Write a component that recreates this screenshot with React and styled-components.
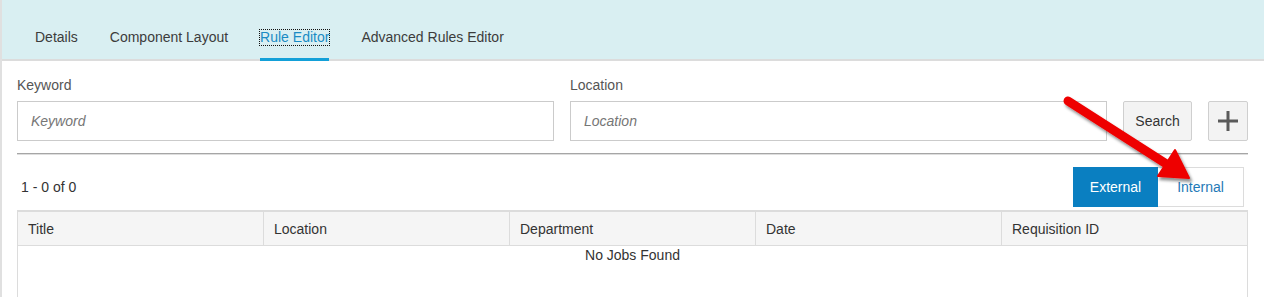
import React from 'react'
import styled, { createGlobalStyle } from 'styled-components'

const GlobalStyle = createGlobalStyle`
    body{
        margin: 0;
        font-family: "Liberation Sans", Arial, sans-serif;
        background: #fff;
    }
`;

const tabs = ['Details', 'Component Layout', 'Rule Editor', 'Advanced Rules Editor']
const columns = ['Title', 'Location', 'Department', 'Date', 'Requisition ID']

const App = () => {
    return (
        <Page>
            <GlobalStyle />
            <TabBar>
                {tabs.map((t) => (
                    <Tab key={t} active={t === 'Rule Editor'}>
                        <span>{t}</span>
                    </Tab>
                ))}
            </TabBar>
            <Content>
                <Filters>
                    <Field>
                        <Label>Keyword</Label>
                        <Input placeholder='Keyword' />
                    </Field>
                    <Field>
                        <Label>Location</Label>
                        <Input placeholder='Location' />
                    </Field>
                    <Button>Search</Button>
                    <Button square aria-label='Add'>
                        <svg width='22' height='22' viewBox='0 0 22 22'>
                            <path d='M1 11h20M11 1v20' stroke='#5a5a5a' strokeWidth='3' />
                        </svg>
                    </Button>
                </Filters>
                <Divider />
                <ResultsBar>
                    <Count>1 - 0 of 0</Count>
                    <Toggle>
                        <ToggleButton active>External</ToggleButton>
                        <ToggleButton>Internal</ToggleButton>
                    </Toggle>
                </ResultsBar>
                <Table>
                    <thead>
                        <tr>
                            {columns.map((c) => <Th key={c}>{c}</Th>)}
                        </tr>
                    </thead>
                    <tbody>
                        <tr>
                            <EmptyCell colSpan={5}>No Jobs Found</EmptyCell>
                        </tr>
                    </tbody>
                </Table>
            </Content>
            <Arrow width='1264' height='297' viewBox='0 0 1264 297'>
                <defs>
                    <filter id='shadow' x='-20%' y='-20%' width='140%' height='140%'>
                        <feDropShadow dx='2' dy='3' stdDeviation='1.5' floodColor='#000' floodOpacity='0.45' />
                    </filter>
                </defs>
                <g filter='url(#shadow)' fill='#ee0000' stroke='#ee0000'>
                    <line x1='1068' y1='101' x2='1168' y2='165' strokeWidth='9' strokeLinecap='round' />
                    <polygon points='1189,178 1158,176 1175,150' strokeWidth='2' strokeLinejoin='round' />
                </g>
            </Arrow>
        </Page>
    )
}

const Page = styled.div`
    position: relative;
    min-height: 297px;
    border-left: 2px solid #e0e0e0;
    overflow: hidden;
`;

const TabBar = styled.div`
    display: flex;
    gap: 32px;
    height: 61px;
    box-sizing: border-box;
    padding-left: 33px;
    background: #d9eff2;
    box-shadow: inset 0 -2px 0 #dcdcdc;
`;

const Tab = styled.div`
    box-sizing: border-box;
    height: 61px;
    padding-top: 29px;
    font-size: 14px;
    color: ${(p) => (p.active ? '#1a8bc4' : '#3c3c3c')};
    border-bottom: 3px solid ${(p) => (p.active ? '#13a0d8' : 'transparent')};
    span{
        display: inline-block;
        line-height: 15px;
        outline: ${(p) => (p.active ? '1px dotted #111' : 'none')};
    }
`;

const Content = styled.div`
    padding: 17px 16px 0 15px;
`;

const Filters = styled.div`
    display: flex;
    align-items: flex-end;
    gap: 16px;
`;

const Field = styled.div`
    flex: 1;
    display: flex;
    flex-direction: column;
    gap: 8px;
`;

const Label = styled.label`
    font-size: 14px;
    line-height: 15px;
    color: #555;
`;

const Input = styled.input`
    box-sizing: border-box;
    height: 40px;
    width: 100%;
    padding: 0 13px;
    border: 1px solid #cbcbcb;
    font-family: inherit;
    font-size: 14px;
    color: #333;
    &::placeholder{
        color: #767676;
        font-style: italic;
    }
`;

const Button = styled.button`
    box-sizing: border-box;
    height: 40px;
    width: ${(p) => (p.square ? '40px' : '69px')};
    display: flex;
    align-items: center;
    justify-content: center;
    padding: 0;
    background: #f3f3f3;
    border: 1px solid #cfcfcf;
    border-radius: 2px;
    font-family: inherit;
    font-size: 14px;
    color: #333;
`;

const Divider = styled.div`
    margin-top: 12px;
    height: 2px;
    background: linear-gradient(#a6a6a6 50%, #dedede 50%);
`;

const ResultsBar = styled.div`
    display: flex;
    align-items: center;
    justify-content: space-between;
    margin-top: 12px;
    padding-right: 4px;
`;

const Count = styled.span`
    padding-left: 4px;
    font-size: 14px;
    color: #333;
`;

const Toggle = styled.div`
    display: flex;
`;

const ToggleButton = styled.div`
    box-sizing: border-box;
    width: ${(p) => (p.active ? '85px' : '86px')};
    height: 40px;
    display: flex;
    align-items: center;
    justify-content: center;
    font-size: 14px;
    background: ${(p) => (p.active ? '#0a7fc1' : '#fff')};
    color: ${(p) => (p.active ? '#fff' : '#1f7ab7')};
    border: 1px solid ${(p) => (p.active ? '#0a7fc1' : '#dcdcdc')};
    border-left: ${(p) => (p.active ? '1px solid #0a7fc1' : 'none')};
`;

const Table = styled.table`
    width: 100%;
    margin-top: 3px;
    border-collapse: collapse;
    table-layout: fixed;
    border-top: 2px solid #dcdcdc;
    border-left: 1px solid #dcdcdc;
    border-right: 1px solid #dcdcdc;
`;

const Th = styled.th`
    height: 33px;
    padding: 0 10px;
    text-align: left;
    font-weight: normal;
    font-size: 14px;
    color: #333;
    background: #f5f5f5;
    border: 1px solid #dcdcdc;
    border-top: none;
`;

const EmptyCell = styled.td`
    height: 60px;
    padding-top: 1px;
    vertical-align: top;
    text-align: center;
    font-size: 14px;
    line-height: 16px;
    color: #333;
`;

const Arrow = styled.svg`
    position: absolute;
    top: 0;
    left: -2px;
    pointer-events: none;
`;

export default App
